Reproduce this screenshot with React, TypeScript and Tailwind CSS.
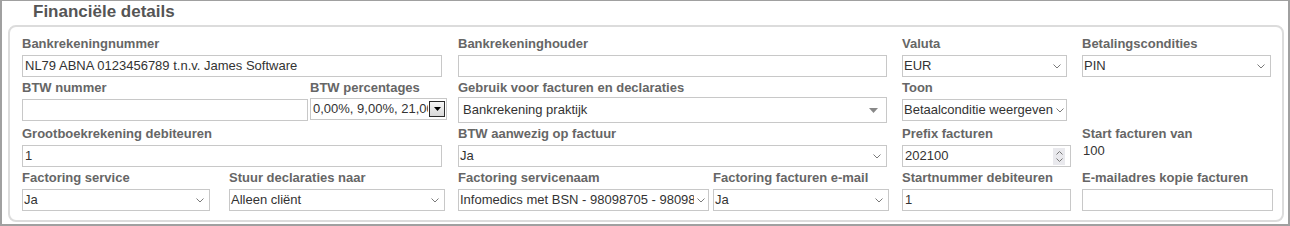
import React from "react";

const font = "font-['Liberation_Sans',Arial,Helvetica,sans-serif]";

function Label({ children, className = "mb-[3px]" }: { children: React.ReactNode; className?: string }) {
  return (
    <div className={`text-[13px] leading-[17px] font-bold text-[#666] whitespace-nowrap ${className}`}>
      {children}
    </div>
  );
}

function Chevron() {
  return (
    <svg width="8" height="5" viewBox="0 0 8 5" className="shrink-0">
      <path d="M0.5 0.5 L4 4 L7.5 0.5" fill="none" stroke="#7a7a7a" strokeWidth="1" />
    </svg>
  );
}

function TextInput({ value = "", width }: { value?: string; width: string }) {
  return (
    <div
      className={`${width} h-[22px] border border-[#c8c8c8] bg-white px-[2px] flex items-center text-[13px] text-[#333] whitespace-nowrap overflow-hidden`}
    >
      {value}
    </div>
  );
}

function Select({ value, width, arrow = "w-[18px]" }: { value: string; width: string; arrow?: string }) {
  return (
    <div className={`${width} h-[22px] border border-[#c8c8c8] bg-white flex items-center text-[13px] text-[#333]`}>
      <span className="flex-1 overflow-hidden whitespace-nowrap pl-[1px]">{value}</span>
      <span className={`${arrow} flex justify-center shrink-0`}>
        <Chevron />
      </span>
    </div>
  );
}

function Field({ label, children }: { label: string; children: React.ReactNode }) {
  return (
    <div>
      <Label>{label}</Label>
      {children}
    </div>
  );
}

export default function App() {
  return (
    <div
      className={`${font} w-[1290px] h-[226px] box-border bg-white border-t border-x-2 border-b-2 border-[#a0a0a0] overflow-hidden`}
    >
      {/* Title */}
      <div className="pl-[31px] pt-[1px] h-[20px] text-[17px] leading-[20px] font-bold text-[#555]">
        Financiële details
      </div>

      {/* Fieldset */}
      <div className="mt-[4px] ml-[6px] mr-[4px] border-2 border-[#dcdcdc] rounded-[8px] pt-[8px] pb-[9px] pl-[12px] pr-[10px]">
        <div className="grid grid-cols-[436px_444px_180px_1fr] gap-y-[2px] items-start">
          {/* Row 1 */}
          <Field label="Bankrekeningnummer">
            <TextInput width="w-[420px]" value="NL79 ABNA 0123456789 t.n.v. James Software" />
          </Field>
          <Field label="Bankrekeninghouder">
            <TextInput width="w-[429px]" />
          </Field>
          <Field label="Valuta">
            <Select width="w-[165px]" value="EUR" />
          </Field>
          <Field label="Betalingscondities">
            <Select width="w-[189px]" value="PIN" />
          </Field>

          {/* Row 2 */}
          <div className="flex">
            <div className="w-[288px]">
              <Field label="BTW nummer">
                <TextInput width="w-[286px]" />
              </Field>
            </div>
            <div>
              <Label className="mb-[2px]">BTW percentages</Label>
              <div className="w-[137px] h-[22px] border border-[#c8c8c8] bg-white flex items-center text-[13px] text-[#333]">
                <span className="flex-1 overflow-hidden whitespace-nowrap pl-[2px]">0,00%, 9,00%, 21,00%</span>
                <span className="w-[16px] h-[16px] mr-[1px] ml-[1px] border border-[#2b2b2b] bg-gradient-to-b from-[#f6f6f6] to-[#d8d8d8] flex items-center justify-center shrink-0">
                  <svg width="7" height="4" viewBox="0 0 7 4">
                    <polygon points="0,0 7,0 3.5,4" fill="#000" />
                  </svg>
                </span>
              </div>
            </div>
          </div>
          <div>
            <Label className="mb-[1px]">Gebruik voor facturen en declaraties</Label>
            <div className="w-[429px] h-[26px] border border-[#c8c8c8] bg-white flex items-center text-[13px] text-[#333]">
              <span className="flex-1 pl-[4px] whitespace-nowrap">Bankrekening praktijk</span>
              <svg width="9" height="5" viewBox="0 0 9 5" className="mr-[8px]">
                <polygon points="0,0 9,0 4.5,5" fill="#888" />
              </svg>
            </div>
          </div>
          <Field label="Toon">
            <Select width="w-[165px]" value="Betaalconditie weergeven" arrow="w-[12px]" />
          </Field>
          <div />

          {/* Row 3 */}
          <Field label="Grootboekrekening debiteuren">
            <TextInput width="w-[420px]" value="1" />
          </Field>
          <Field label="BTW aanwezig op factuur">
            <Select width="w-[429px]" value="Ja" />
          </Field>
          <Field label="Prefix facturen">
            <div className="w-[169px] h-[22px] border border-[#c8c8c8] bg-white flex items-center text-[13px] text-[#333]">
              <span className="flex-1 pl-[2px]">202100</span>
              <span className="w-[12px] h-[17px] mr-[5px] bg-[#e9e9ed] flex flex-col items-center justify-center gap-[3px] shrink-0">
                <svg width="7" height="4" viewBox="0 0 7 4">
                  <path d="M0.5 3.5 L3.5 0.5 L6.5 3.5" fill="none" stroke="#777" strokeWidth="1" />
                </svg>
                <svg width="7" height="4" viewBox="0 0 7 4">
                  <path d="M0.5 0.5 L3.5 3.5 L6.5 0.5" fill="none" stroke="#777" strokeWidth="1" />
                </svg>
              </span>
            </div>
          </Field>
          <div>
            <Label className="mb-0">Start facturen van</Label>
            <div className="text-[13px] leading-[17px] text-[#333] pl-[1px]">100</div>
          </div>

          {/* Row 4 */}
          <div className="flex">
            <div className="w-[207px]">
              <Field label="Factoring service">
                <Select width="w-[188px]" value="Ja" />
              </Field>
            </div>
            <Field label="Stuur declaraties naar">
              <Select width="w-[216px]" value="Alleen cliënt" />
            </Field>
          </div>
          <div className="flex">
            <div className="w-[255px]">
              <Field label="Factoring servicenaam">
                <Select width="w-[251px]" value="Infomedics met BSN - 98098705 - 98098705" arrow="w-[14px]" />
              </Field>
            </div>
            <Field label="Factoring facturen e-mail">
              <Select width="w-[176px]" value="Ja" />
            </Field>
          </div>
          <Field label="Startnummer debiteuren">
            <TextInput width="w-[169px]" value="1" />
          </Field>
          <Field label="E-mailadres kopie facturen">
            <TextInput width="w-[191px]" />
          </Field>
        </div>
      </div>
    </div>
  );
}
